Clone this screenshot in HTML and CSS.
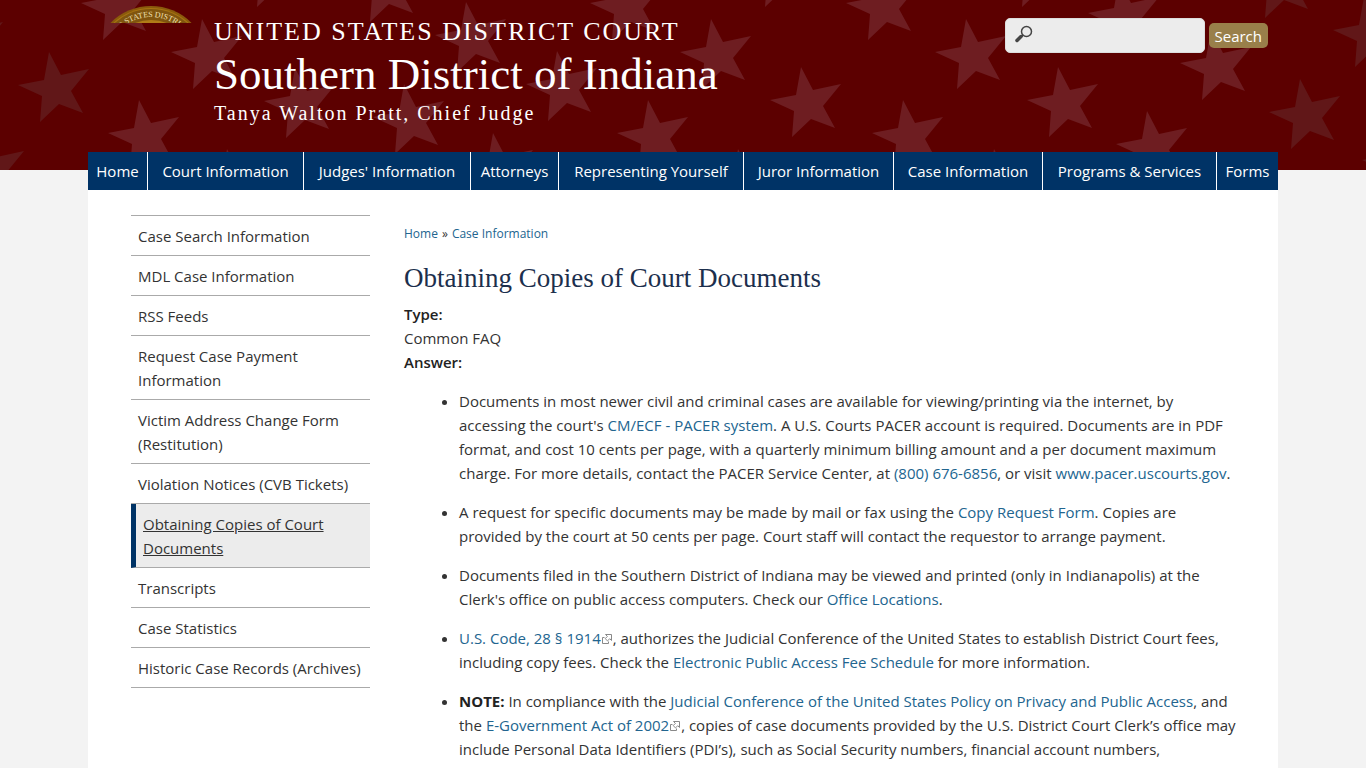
FILE: index.html
```html
<!DOCTYPE html>
<html lang="en">
<head>
<meta charset="utf-8">
<meta name="viewport" content="width=device-width, initial-scale=1">
<title>Obtaining Copies of Court Documents | Southern District of Indiana</title>
<link rel="stylesheet" href="styles.css">
</head>
<body>
<svg class="defs" aria-hidden="true">
  <defs>
    <path id="star" d="M0 0L12 23L40 17L22 39L34 61L10 52L-9 70L-7 44L-31 33L-5 28Z"/>
    <symbol id="ext" viewBox="0 0 10 10">
      <path d="M3.5.5h6v6L7.7 4.7 5.5 6.900 3.200 4.600 5.400 2.400z" fill="#fff" stroke="#888"/>
      <path d="M2.500 3.500h-2v6h6v-2" fill="none" stroke="#888"/>
    </symbol>
  </defs>
</svg>
<header class="banner">
  <svg class="stars" aria-hidden="true">
    <g class="stars-dim">
      <use href="#star" x="49" y="52"/><use href="#star" x="-37" y="5"/><use href="#star" x="-16" y="134"/>
      <use href="#star" x="1300" y="79"/><use href="#star" x="1364" y="-3"/><use href="#star" x="1393" y="127"/><use href="#star" x="1274" y="-52"/>
    </g>
    <g class="stars-lit">
      <use href="#star" x="112" y="-30"/><use href="#star" x="202" y="19"/><use href="#star" x="139" y="100"/>
      <use href="#star" x="295" y="68"/><use href="#star" x="227" y="149"/><use href="#star" x="266" y="-63"/>
      <use href="#star" x="379" y="-48"/><use href="#star" x="466" y="2"/><use href="#star" x="404" y="84"/>
      <use href="#star" x="493" y="133"/><use href="#star" x="557" y="51"/><use href="#star" x="621" y="-30"/>
      <use href="#star" x="711" y="19"/><use href="#star" x="648" y="100"/><use href="#star" x="738" y="149"/>
      <use href="#star" x="774" y="-63"/><use href="#star" x="801" y="67"/><use href="#star" x="877" y="-30"/>
      <use href="#star" x="966" y="19"/><use href="#star" x="903" y="100"/><use href="#star" x="994" y="149"/>
      <use href="#star" x="1031" y="-63"/><use href="#star" x="1058" y="67"/><use href="#star" x="1119" y="-20"/>
      <use href="#star" x="1211" y="30"/><use href="#star" x="1147" y="111"/>
    </g>
  </svg>
  <div class="wrap banner-row">
    <svg class="seal" width="84" height="17" viewBox="0 0 84 17" role="img" aria-label="Court seal">
      <circle cx="42" cy="57" r="57" fill="#8a5a0c"/>
      <circle cx="42" cy="57" r="55" fill="#a87512"/>
      <circle cx="42" cy="57" r="54" fill="#80550f"/>
      <circle cx="42" cy="57" r="43" fill="#b07c17"/>
      <path id="arc" d="M-4 57A46 46 0 0 1 88 57" fill="none"/>
      <text class="seal-text"><textPath href="#arc" startOffset="52%">D STATES DISTRICT</textPath></text>
    </svg>
    <div class="titles">
      <p class="court">UNITED STATES DISTRICT COURT</p>
      <p class="district">Southern District of Indiana</p>
      <p class="judge">Tanya Walton Pratt, Chief Judge</p>
    </div>
    <form class="search" role="search">
      <label class="field">
        <svg width="18" height="18" viewBox="0 0 18 18" aria-hidden="true">
          <circle cx="11.500" cy="6.500" r="5" fill="none" stroke="#444" stroke-width="1.500"/>
          <path d="M8 10L6.500 11.500" stroke="#444" stroke-width="2"/>
          <path d="M6 11.500L2 15.500" stroke="#444" stroke-width="3.500" stroke-linecap="round"/>
        </svg>
        <input type="text" aria-label="Search this site">
      </label>
      <button type="submit">Search</button>
    </form>
  </div>
</header>
<div class="wrap page">
  <nav class="menu" aria-label="Main menu">
    <a href="#">Home</a><a href="#">Court Information</a><a href="#">Judges' Information</a><a href="#">Attorneys</a><a href="#">Representing Yourself</a><a href="#">Juror Information</a><a href="#">Case Information</a><a href="#">Programs &amp; Services</a><a href="#">Forms</a>
  </nav>
  <div class="columns">
    <nav class="side" aria-label="Case information">
      <a href="#">Case Search Information</a>
      <a href="#">MDL Case Information</a>
      <a href="#">RSS Feeds</a>
      <a href="#">Request Case Payment Information</a>
      <a href="#">Victim Address Change Form (Restitution)</a>
      <a href="#">Violation Notices (CVB Tickets)</a>
      <a href="#" class="active" aria-current="page">Obtaining Copies of Court Documents</a>
      <a href="#">Transcripts</a>
      <a href="#">Case Statistics</a>
      <a href="#">Historic Case Records (Archives)</a>
    </nav>
    <main class="content">
      <div class="crumbs"><a href="#">Home</a><span>»</span><a href="#">Case Information</a></div>
      <h1>Obtaining Copies of Court Documents</h1>
      <div class="label">Type:</div>
      <div>Common FAQ</div>
      <div class="label">Answer:</div>
      <ul>
        <li>Documents in most newer civil and criminal cases are available for viewing/printing via the internet, by accessing the court's <a href="#">CM/ECF - PACER system</a>. A U.S. Courts PACER account is required. Documents are in PDF format, and cost 10 cents per page, with a quarterly minimum billing amount and a per document maximum charge. For more details, contact the PACER Service Center, at <a href="#">(800) 676-6856</a>, or visit <a href="#">www.pacer.uscourts.gov</a>.</li>
        <li>A request for specific documents may be made by mail or fax using the <a href="#">Copy Request Form</a>. Copies are provided by the court at 50 cents per page. Court staff will contact the requestor to arrange payment.</li>
        <li>Documents filed in the Southern District of Indiana may be viewed and printed (only in Indianapolis) at the Clerk's office on public access computers. Check our <a href="#">Office Locations</a>.</li>
        <li><a href="#">U.S. Code, 28 § 1914<svg class="ext" aria-hidden="true"><use href="#ext"/></svg></a>, authorizes the Judicial Conference of the United States to establish District Court fees, including copy fees. Check the <a href="#">Electronic Public Access Fee Schedule</a> for more information.</li>
        <li><strong>NOTE:</strong> In compliance with the <a href="#">Judicial Conference of the United States Policy on Privacy and Public Access</a>, and the <a href="#">E-Government Act of 2002<svg class="ext" aria-hidden="true"><use href="#ext"/></svg></a>, copies of case documents provided by the U.S. District Court Clerk’s office may include Personal Data Identifiers (PDI’s), such as Social Security numbers, financial account numbers,</li>
      </ul>
    </main>
  </div>
</div>
</body>
</html>
```
FILE: styles.css
```css
* { box-sizing: border-box; }
body {
  margin: 0;
  background: #f3f3f3;
  color: #333;
  font: 400 15px/24px "Open Sans", "Noto Sans", sans-serif;
}
a { color: #22658f; text-decoration: none; }
p { margin: 0; }
.defs { position: absolute; width: 0; height: 0; }
.wrap { max-width: 1190px; margin: 0 auto; }

.banner {
  position: relative;
  overflow: hidden;
  background: #5c0000;
  padding-bottom: 18px;
}
.stars { position: absolute; inset: 0; width: 100%; height: 100%; }
.stars-dim { fill: #611718; }
.stars-lit { fill: #6e1d21; }
.banner-row {
  position: relative;
  display: flex;
  align-items: flex-start;
  min-height: 152px;
  padding: 0 10px 0 21px;
}
.seal { flex: none; margin-top: 6px; }
.seal-text {
  font: 400 8px "Liberation Serif", serif;
  fill: #f0e0b4;
  text-anchor: middle;
}
.titles {
  flex: 1;
  padding: 14px 0 0 21px;
  color: #fff;
  font-family: "Liberation Serif", serif;
  font-weight: 400;
  white-space: nowrap;
}
.court { font-size: 26px; line-height: 36px; letter-spacing: 2px; }
.district { font-size: 45px; line-height: 48px; }
.judge { font-size: 20px; line-height: 30px; letter-spacing: 2px; }
.search { display: flex; align-items: center; gap: 4px; padding-top: 18px; }
.field {
  display: flex;
  width: 200px;
  height: 35px;
  padding: 6px 9px;
  background: #ececec;
  border: 1px solid #ddd;
  border-radius: 5px;
}
.field svg { flex: none; }
.field input { flex: 1; min-width: 0; border: 0; outline: 0; background: transparent; font: inherit; }
.search button {
  height: 25px;
  padding: 0 6px;
  border: 0;
  border-radius: 5px;
  background: #997f4a;
  color: #fff;
  font: 400 15px/24px "Open Sans", sans-serif;
}

.page { position: relative; margin-top: -18px; background: #fff; }
.menu {
  display: grid;
  grid-template-columns: 60fr 156fr 167fr 88fr 185fr 150fr 149fr 174fr 61fr;
  background: #036;
}
.menu a {
  padding: 7px 0;
  border-right: 1px solid #fff;
  color: #fff;
  text-align: center;
  white-space: nowrap;
}
.menu a:last-child { border-right: 0; }
.columns { display: flex; gap: 34px; padding: 25px 40px 15px 43px; }
.side { flex: 0 0 239px; }
.side a {
  display: block;
  padding: 8px 7px 7px;
  border-bottom: 1px solid #aaa;
  color: #333;
}
.side a:first-child { border-top: 1px solid #aaa; }
.side .active {
  border-left: 5px solid #036;
  background: #ececec;
  text-decoration: underline;
}
.content { flex: 1; min-width: 0; padding-top: 7px; }
.crumbs { font-size: 12px; }
.crumbs span { margin: 0 4px; }
h1 {
  margin: 16px 0 8px;
  color: #1c2f4d;
  font: 400 27px/32px "Liberation Serif", serif;
}
.label { color: #222; font-weight: 600; }
ul { margin: 15px 0 0; padding-left: 55px; }
li { margin-bottom: 15px; }
strong { color: #222; font-weight: 700; }
.ext { width: 10px; height: 10px; margin: 0 1px; }
```
